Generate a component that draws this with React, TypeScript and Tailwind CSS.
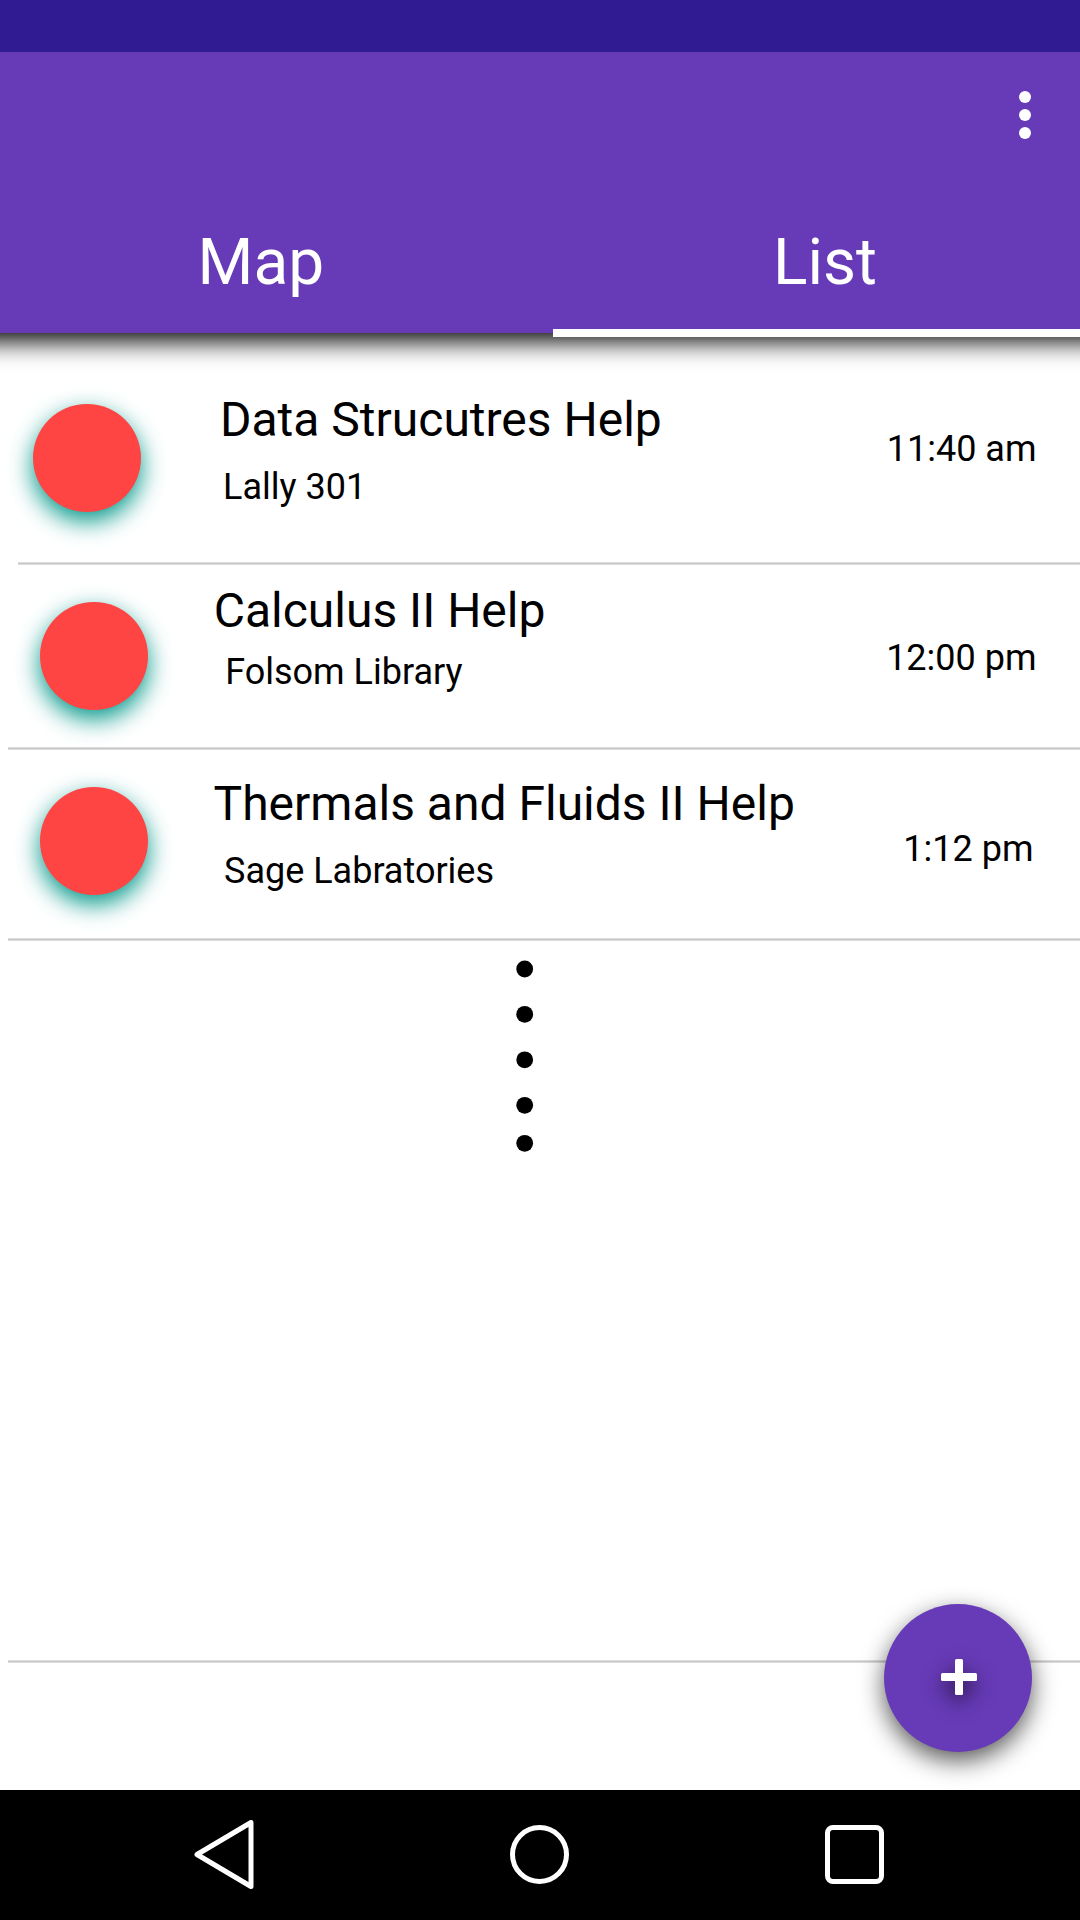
type Meeting = {
  title: string;
  place: string;
  time: string;
  row: string;
  avatar: string;
  text: string;
  placeOffset: string;
  timeOffset: string;
  divider: string;
};

const meetings: Meeting[] = [
  {
    title: "Data Strucutres Help",
    place: "Lally 301",
    time: "11:40 am",
    row: "h-[229px]",
    avatar: "ml-[33px] mt-[71px]",
    text: "ml-[79px] mt-[63px]",
    placeOffset: "ml-[3px] mt-[25px]",
    timeOffset: "mt-[98px] mr-[43.5px]",
    divider: "ml-[17.5px]",
  },
  {
    title: "Calculus II Help",
    place: "Folsom Library",
    time: "12:00 pm",
    row: "h-[182px]",
    avatar: "ml-[40px] mt-[37px]",
    text: "ml-[65.7px] mt-[22px]",
    placeOffset: "ml-[11.5px] mt-[19px]",
    timeOffset: "mt-[75px] mr-[43.5px]",
    divider: "ml-[8px]",
  },
  {
    title: "Thermals and Fluids II Help",
    place: "Sage Labratories",
    time: "1:12 pm",
    row: "h-[188px]",
    avatar: "ml-[40px] mt-[37px]",
    text: "ml-[65.5px] mt-[30px]",
    placeOffset: "ml-[10.5px] mt-[25px]",
    timeOffset: "mt-[81px] mr-[46.5px]",
    divider: "ml-[8px]",
  },
];

const dotCenters = [9, 54.3, 99.8, 145.3, 183.3];

function Divider({ className }: { className: string }) {
  return <div className={`h-[3px] border-y border-[#dcdcdc] bg-[#c8c8c8] ${className}`} />;
}

function MeetingRow({ meeting }: { meeting: Meeting }) {
  return (
    <li>
      <div className={`flex items-start ${meeting.row}`}>
        <div
          className={`size-[108px] shrink-0 rounded-full bg-[#ff4444] shadow-[0_9px_24px_#009688] ${meeting.avatar}`}
        />
        <div className={meeting.text}>
          <h2 className="text-[48px] leading-[48px] whitespace-nowrap">{meeting.title}</h2>
          <p className={`text-[36px] leading-[36px] whitespace-nowrap ${meeting.placeOffset}`}>{meeting.place}</p>
        </div>
        <time className={`ml-auto text-[36px] leading-[36px] whitespace-nowrap ${meeting.timeOffset}`}>
          {meeting.time}
        </time>
      </div>
      <Divider className={meeting.divider} />
    </li>
  );
}

function Header() {
  return (
    <header className="relative z-10">
      <div className="relative z-10 h-[52px] bg-[#311b92]" />
      <div className="-mx-[40px] flex h-[281px] flex-col bg-[#673ab7] px-[40px] text-white shadow-[0_8px_24px_#000000]">
        <button className="mt-[39px] mr-[49px] flex flex-col gap-[6px] self-end" aria-label="More options">
          <span className="size-[12px] rounded-full bg-white" />
          <span className="size-[12px] rounded-full bg-white" />
          <span className="size-[12px] rounded-full bg-white" />
        </button>
        <nav className="mt-[92px] flex text-[64px] leading-[64px]">
          <div className="w-[553px] pl-[197.5px]">Map</div>
          <div className="flex h-[106px] flex-1 flex-col justify-between">
            <span className="pl-[220px]">List</span>
            <div className="h-[8px] shrink-0 bg-white" />
          </div>
        </nav>
      </div>
    </header>
  );
}

export default function App() {
  return (
    <div className="flex h-[1920px] w-[1080px] flex-col overflow-hidden bg-white font-['Roboto',sans-serif] text-black">
      <Header />
      <main className="relative flex-1">
        <ul>
          {meetings.map((m) => (
            <MeetingRow key={m.title} meeting={m} />
          ))}
        </ul>
        <svg className="mt-[19px] ml-[516px] block h-[192px] w-[18px]" viewBox="0 0 18 192" fill="#000000">
          {dotCenters.map((cy) => (
            <circle key={cy} cx="8.7" cy={cy} r="8.4" />
          ))}
        </svg>
        <Divider className="mt-[508px] ml-[8px]" />
        <button
          className="absolute right-[48px] bottom-[38px] flex size-[148px] items-center justify-center rounded-full bg-[#673ab7] shadow-[0_9px_24px_rgba(0,0,0,0.65)]"
          aria-label="Add"
        >
          <svg
            className="mt-[-2px] ml-[2px] size-[36px] overflow-visible drop-shadow-[0_8px_10px_rgba(0,0,0,0.65)]"
            viewBox="0 0 36 36"
            fill="#ffffff"
          >
            <rect x="14" width="8" height="36" rx="1.5" />
            <rect y="14" width="36" height="8" rx="1.5" />
          </svg>
        </button>
      </main>
      <footer className="relative flex h-[130px] items-start bg-black">
        <svg
          className="mt-[30px] ml-[194px] h-[69px] w-[60px]"
          viewBox="0 0 60 69"
          fill="none"
          stroke="#ffffff"
          strokeWidth="5"
          strokeLinejoin="round"
        >
          <path d="M3 34.5 57 2.5V66.5Z" />
        </svg>
        <div className="mt-[35px] ml-[256px] size-[59px] rounded-full border-[5px] border-white" />
        <div className="mt-[35px] ml-[256px] size-[59px] rounded-[8px] border-[5px] border-white" />
      </footer>
    </div>
  );
}
